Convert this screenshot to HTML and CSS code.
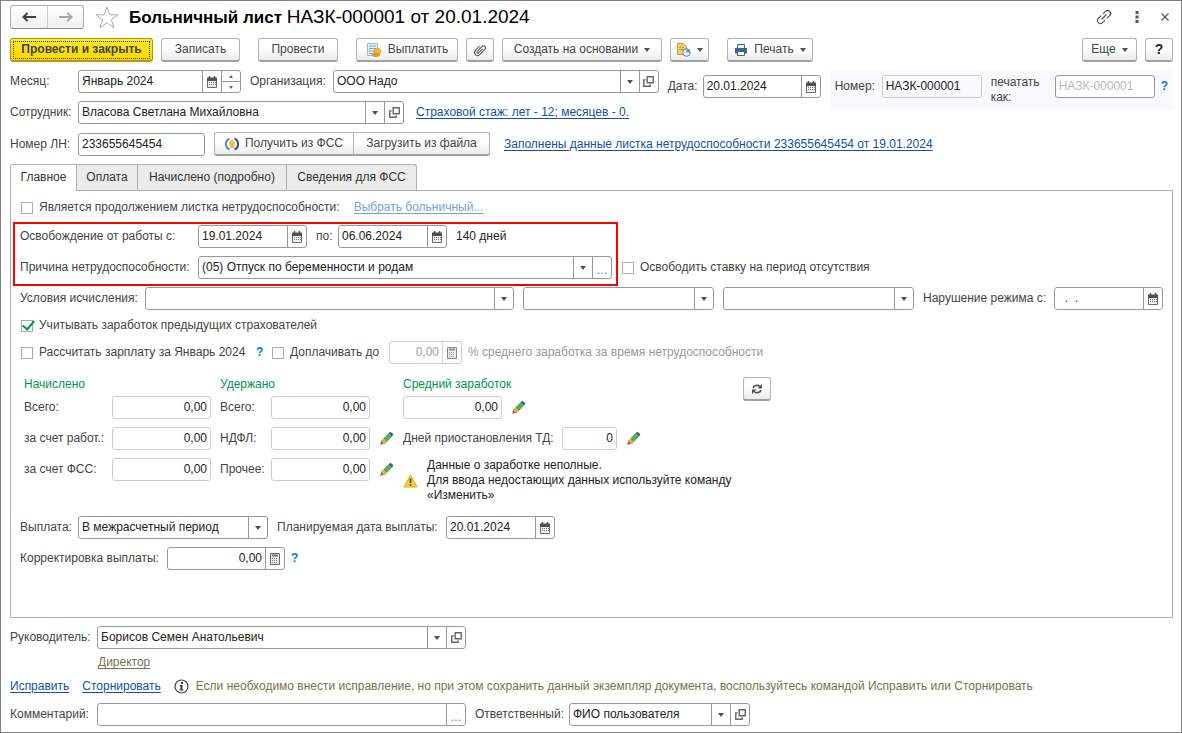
FILE: index.html
```html
<!DOCTYPE html>
<html lang="ru">
<head>
<meta charset="utf-8">
<title>Больничный лист НАЗК-000001</title>
<link rel="stylesheet" href="styles.css">
</head>
<body>
<svg class="sprite" aria-hidden="true">
  <symbol id="cal" viewBox="0 0 12 12">
    <path d="M1.500 2.500h9v9h-9z" fill="#f0f0f0" stroke="#6a6a6a"/><path d="M1 1.500h10v3.500H1z" fill="#505050"/><path d="M3.500 0v3M8.500 0v3" stroke="#505050" stroke-width="1.500"/><path d="M3 6.500h7M3 8.500h7" stroke="#777" stroke-dasharray="1 1"/>
  </symbol>
  <symbol id="calc" viewBox="0 0 12 12">
    <path d="M1.500.500h9v11h-9z" fill="#e6e6e6" stroke="#6a6a6a"/><path d="M3 2.500h6" stroke="#777" stroke-width="2"/><path d="M3 5.500h6M3 7.500h6M3 9.500h6" stroke="#888" stroke-dasharray="1 1"/>
  </symbol>
  <symbol id="arrow" viewBox="0 0 6 4"><path d="M0 0h6L3 4z" fill="#505050"/></symbol>
  <symbol id="open" viewBox="0 0 10 10">
    <path d="M3.800.700h5.500v5.500H3.800z" fill="none" stroke="#666" stroke-width="1.300"/><path d="M2.500 3.500H.700v5.800h5.800V7.500" fill="none" stroke="#666" stroke-width="1.300"/>
  </symbol>
  <symbol id="pencil" viewBox="0 0 14 14">
    <path d="M1 13l1.500-4.500 3 3z" fill="#8a6540"/><path d="M2 9l2-2 3.500 3.500-2.500 2z" fill="#f0a848"/><path d="M4 7l5-5 3.200 3.200-5 5z" fill="#4dae59"/><path d="M9 2l1.500-1.300L13.500 3l-1.400 2.200z" fill="#46576a"/>
  </symbol>
  <symbol id="clip" viewBox="0 0 16 16">
    <g transform="rotate(45 8 8)" fill="none" stroke="#666" stroke-width="1.200"><path d="M5 5.500v6a3 3 0 0 0 6 0V4a2 2 0 0 0-4 0v7a1 1 0 0 0 2 0V5.500"/></g>
  </symbol>
</svg>

<main class="window">
  <header class="title-row">
    <div class="nav">
      <button type="button" aria-label="Назад"><svg width="16" height="10" viewBox="0 0 16 10"><path d="M15 5H3M6.500 1L2.500 5l4 4" fill="none" stroke="#404040" stroke-width="2"/></svg></button>
      <button type="button" aria-label="Вперед"><svg width="16" height="10" viewBox="0 0 16 10"><path d="M1 5h12M9.500 1l4 4-4 4" fill="none" stroke="#a8a8a8" stroke-width="2"/></svg></button>
    </div>
    <button type="button" class="plain" aria-label="В избранное"><svg width="24" height="23" viewBox="0 0 24 23"><path d="M12 1l2.800 7.800H23l-6.600 4.900 2.600 8L12 16.900 5 21.700l2.600-8L1 8.800h8.200z" fill="none" stroke="#a5adb5"/></svg></button>
    <h1>Больничный лист <span>НАЗК-000001 от 20.01.2024</span></h1>
    <div class="window-tools">
      <button type="button" class="plain" aria-label="Ссылка"><svg width="18" height="18" viewBox="0 0 18 18"><g transform="rotate(-45 9 9)" fill="none" stroke="#555" stroke-width="1.200"><path d="M8 6H4a3 3 0 0 0 0 6h3.500M10 12h4a3 3 0 0 0 0-6h-3.500M5.500 9h7"/></g></svg></button>
      <button type="button" class="plain" aria-label="Меню"><svg width="4" height="12" viewBox="0 0 4 12"><path d="M.500 0h3v3h-3zM.500 4.500h3v3h-3zM.500 9h3v3h-3z" fill="#555"/></svg></button>
      <button type="button" class="plain" aria-label="Закрыть"><svg width="8" height="8" viewBox="0 0 8 8"><path d="M.500.500l7 7M7.500.500l-7 7" stroke="#555" stroke-width="1.200"/></svg></button>
    </div>
  </header>

  <div class="toolbar">
    <button type="button" class="btn primary">Провести и закрыть</button>
    <button type="button" class="btn w79">Записать</button>
    <button type="button" class="btn w80 apart">Провести</button>
    <button type="button" class="btn w102 apart"><svg width="16" height="16" viewBox="0 0 16 16"><path d="M1.500 1.500h10v12h-10z" fill="#e9f2f8" stroke="#9db6c8"/><path d="M3 4h7M3 6.500h7M3 9h6M3 11.500h4" stroke="#7fa9c9"/><ellipse cx="10" cy="12.500" rx="4" ry="2.500" fill="#dd9a22"/><ellipse cx="11.500" cy="9" rx="3.500" ry="2.500" fill="#f3bd3b" stroke="#c88a20" stroke-width=".6"/></svg>Выплатить</button>
    <button type="button" class="btn w28" aria-label="Файлы"><svg width="16" height="16"><use href="#clip"/></svg></button>
    <button type="button" class="btn w160">Создать на основании<svg width="6" height="4"><use href="#arrow"/></svg></button>
    <button type="button" class="btn w39" aria-label="Отчеты"><svg width="15" height="15" viewBox="0 0 15 15"><path d="M1.500 1.500h6l3 3v8h-9z" fill="#f3cf68" stroke="#c99b34"/><path d="M3 5h5M3 7.500h5" stroke="#c99b34"/><circle cx="10.500" cy="10.500" r="3.800" fill="#e9f1fa" stroke="#5f7fa8"/><path d="M10.500 10.500V7a3.500 3.500 0 0 1 3.500 3.500z" fill="#5f8cc4"/></svg><svg width="6" height="4"><use href="#arrow"/></svg></button>
    <button type="button" class="btn w86 apart"><svg width="14" height="14" viewBox="0 0 14 14"><path d="M3.500 1.500h7v4h-7z" fill="#fff" stroke="#3d6589"/><path d="M1 5h12v5.500H1z" fill="#3d6589"/><path d="M3.500 8.500h7v4h-7z" fill="#fff" stroke="#3d6589"/></svg>Печать<svg width="6" height="4"><use href="#arrow"/></svg></button>
    <button type="button" class="btn w55 right">Еще<svg width="6" height="4"><use href="#arrow"/></svg></button>
    <button type="button" class="btn w28"><b>?</b></button>
  </div>

  <section class="head">
    <div class="head-left">
      <div class="row">
        <label class="cap main-cap" for="month">Месяц:</label>
        <span class="field w163"><input id="month" value="Январь 2024"><button type="button" aria-label="Календарь"><svg width="12" height="12"><use href="#cal"/></svg></button><span class="spin"><button type="button" aria-label="Больше"><svg width="4" height="3" viewBox="0 0 4 3"><path d="M0 3h4L2 0z" fill="#666"/></svg></button><button type="button" aria-label="Меньше"><svg width="4" height="3" viewBox="0 0 4 3"><path d="M0 0h4L2 3z" fill="#666"/></svg></button></span></span>
        <label class="cap w83 after" for="org">Организация:</label>
        <span class="field grow"><span class="pick"><select id="org"><option>ООО Надо</option></select><svg width="6" height="4"><use href="#arrow"/></svg></span><button type="button" aria-label="Открыть организацию"><svg width="11" height="11"><use href="#open"/></svg></button></span>
      </div>
      <div class="row">
        <label class="cap main-cap" for="emp">Сотрудник:</label>
        <span class="field w326"><span class="pick"><select id="emp"><option>Власова Светлана Михайловна</option></select><svg width="6" height="4"><use href="#arrow"/></svg></span><button type="button" aria-label="Открыть сотрудника"><svg width="11" height="11"><use href="#open"/></svg></button></span>
        <a class="link-gap" href="#">Страховой стаж: лет - 12; месяцев - 0.</a>
      </div>
    </div>
    <div class="date-block">
      <label class="cap w35" for="date">Дата:</label>
      <span class="field w118"><input id="date" value="20.01.2024"><button type="button" aria-label="Календарь"><svg width="12" height="12"><use href="#cal"/></svg></button></span>
    </div>
    <div class="number-block">
      <label class="cap w47" for="num">Номер:</label>
      <span class="field soft w100"><input id="num" value="НАЗК-000001" readonly></span>
      <label class="print-cap" for="numprint">печатать как:</label>
      <span class="field w100"><input id="numprint" placeholder="НАЗК-000001"></span>
      <a class="help" href="#">?</a>
    </div>
  </section>

  <div class="row sheet-row">
    <label class="cap main-cap" for="ln">Номер ЛН:</label>
    <span class="field w127"><input id="ln" value="233655645454"></span>
    <span class="group after"><button type="button" class="btn w140"><svg width="14" height="14" viewBox="0 0 14 14"><path d="M4.500 1.500a6 6 0 0 0 0 11" fill="none" stroke="#5590cf" stroke-width="2.200"/><path d="M9.500 1.500a6 6 0 0 1 0 11" fill="none" stroke="#355988" stroke-width="2.200"/><path d="M7 2l3 4-1 5H5L4 6z" fill="#f4bd3d"/></svg>Получить из ФСС</button><button type="button" class="btn w137">Загрузить из файла</button></span>
    <a class="after-wide" href="#">Заполнены данные листка нетрудоспособности 233655645454 от 19.01.2024</a>
  </div>

  <nav class="tabs" role="tablist">
    <button type="button" role="tab" class="tab w67 active" aria-selected="true">Главное</button>
    <button type="button" role="tab" class="tab w62">Оплата</button>
    <button type="button" role="tab" class="tab w150">Начислено (подробно)</button>
    <button type="button" role="tab" class="tab w131">Сведения для ФСС</button>
  </nav>

  <section class="pane">
    <div class="row first-row">
      <label class="check"><input type="checkbox">Является продолжением листка нетрудоспособности:</label>
      <a class="after-wide faded" href="#">Выбрать больничный...</a>
    </div>
    <div class="leave">
      <div class="marked">
        <div class="row">
          <label class="cap w178" for="from">Освобождение от работы с:</label>
          <span class="field w109"><input id="from" value="19.01.2024"><button type="button" aria-label="Календарь"><svg width="12" height="12"><use href="#cal"/></svg></button></span>
          <label class="cap after w22" for="to">по:</label>
          <span class="field w109"><input id="to" value="06.06.2024"><button type="button" aria-label="Календарь"><svg width="12" height="12"><use href="#cal"/></svg></button></span>
          <span class="after dark">140 дней</span>
        </div>
        <div class="row">
          <label class="cap w178" for="reason">Причина нетрудоспособности:</label>
          <span class="field grow"><span class="pick"><select id="reason"><option>(05) Отпуск по беременности и родам</option></select><svg width="6" height="4"><use href="#arrow"/></svg></span><button type="button" class="dots">...</button></span>
        </div>
      </div>
      <label class="check"><input type="checkbox">Освободить ставку на период отсутствия</label>
    </div>
    <div class="row">
      <label class="cap w125" for="t1">Условия исчисления:</label>
      <span class="field grow"><span class="pick"><select id="t1"></select><svg width="6" height="4"><use href="#arrow"/></svg></span></span>
      <span class="field w191 after"><span class="pick"><select aria-label="Условие 2"></select><svg width="6" height="4"><use href="#arrow"/></svg></span></span>
      <span class="field w191 after"><span class="pick"><select aria-label="Условие 3"></select><svg width="6" height="4"><use href="#arrow"/></svg></span></span>
      <label class="cap after w131" for="viol">Нарушение режима с:</label>
      <span class="field w109"><input id="viol" value="  .  ."><button type="button" aria-label="Календарь"><svg width="12" height="12"><use href="#cal"/></svg></button></span>
    </div>
    <div class="row">
      <label class="check"><input type="checkbox" checked>Учитывать заработок предыдущих страхователей</label>
    </div>
    <div class="row">
      <label class="check w230"><input type="checkbox">Рассчитать зарплату за Январь 2024</label>
      <a class="help w15" href="#">?</a>
      <label class="check w118"><input type="checkbox">Доплачивать до</label>
      <span class="field soft w73"><input class="num pale" aria-label="Процент" value="0,00" disabled><button type="button" class="pale" aria-label="Калькулятор" disabled><svg width="12" height="12"><use href="#calc"/></svg></button></span>
      <span class="percent">% среднего заработка за время нетрудоспособности</span>
    </div>

    <div class="totals">
      <div class="total-col accrued">
        <h2>Начислено</h2>
        <div class="row"><label class="cap w88" for="a1">Всего:</label><span class="field soft w99"><input id="a1" class="num" value="0,00" readonly></span></div>
        <div class="row"><label class="cap w88" for="a2">за счет работ.:</label><span class="field soft w99"><input id="a2" class="num" value="0,00" readonly></span></div>
        <div class="row"><label class="cap w88" for="a3">за счет ФСС:</label><span class="field soft w99"><input id="a3" class="num" value="0,00" readonly></span></div>
      </div>
      <div class="total-col held">
        <h2>Удержано</h2>
        <div class="row"><label class="cap w51" for="h1">Всего:</label><span class="field soft w99"><input id="h1" class="num" value="0,00" readonly></span></div>
        <div class="row"><label class="cap w51" for="h2">НДФЛ:</label><span class="field soft w99"><input id="h2" class="num" value="0,00" readonly></span><button type="button" class="plain after" aria-label="Изменить НДФЛ"><svg width="15" height="15"><use href="#pencil"/></svg></button></div>
        <div class="row"><label class="cap w51" for="h3">Прочее:</label><span class="field soft w99"><input id="h3" class="num" value="0,00" readonly></span><button type="button" class="plain after" aria-label="Изменить прочее"><svg width="15" height="15"><use href="#pencil"/></svg></button></div>
      </div>
      <div class="total-col average">
        <h2>Средний заработок</h2>
        <div class="row"><span class="field soft w99"><input class="num" aria-label="Средний заработок" value="0,00" readonly></span><button type="button" class="plain after" aria-label="Изменить средний заработок"><svg width="15" height="15"><use href="#pencil"/></svg></button></div>
        <div class="row"><label class="cap w159" for="td">Дней приостановления ТД:</label><span class="field soft w55"><input id="td" class="num" value="0" readonly></span><button type="button" class="plain after" aria-label="Изменить дни"><svg width="15" height="15"><use href="#pencil"/></svg></button></div>
        <div class="warning"><svg width="15" height="14" viewBox="0 0 15 14"><path d="M7.500 1L14 13H1z" fill="#f6d32b" stroke="#d2ad1c" stroke-linejoin="round"/><path d="M7.500 4.500v4.500M7.500 10.300v1.500" stroke="#4a4220" stroke-width="1.700"/></svg><p>Данные о заработке неполные.<br>Для ввода недостающих данных используйте команду<br>«Изменить»</p></div>
      </div>
      <button type="button" class="btn w28" aria-label="Обновить"><svg width="12" height="12" viewBox="0 0 12 12"><path d="M2 5a4 3 0 0 1 7-1.500M10 7a4 3 0 0 1-7 1.500" fill="none" stroke="#505050" stroke-width="1.600"/><path d="M11 1v4.500H6.500zM1 11V6.500h4.500z" fill="#505050"/></svg></button>
    </div>

    <div class="row">
      <label class="cap w58" for="pay">Выплата:</label>
      <span class="field w190"><span class="pick"><select id="pay"><option>В межрасчетный период</option></select><svg width="6" height="4"><use href="#arrow"/></svg></span></span>
      <label class="cap after w169" for="paydate">Планируемая дата выплаты:</label>
      <span class="field w109"><input id="paydate" value="20.01.2024"><button type="button" aria-label="Календарь"><svg width="12" height="12"><use href="#cal"/></svg></button></span>
    </div>
    <div class="row">
      <label class="cap w147" for="corr">Корректировка выплаты:</label>
      <span class="field w118"><input id="corr" class="num" value="0,00"><button type="button" aria-label="Калькулятор"><svg width="12" height="12"><use href="#calc"/></svg></button></span>
      <a class="help" href="#">?</a>
    </div>
  </section>

  <footer class="foot">
    <div class="row">
      <label class="cap foot-cap" for="boss">Руководитель:</label>
      <span class="field w369"><span class="pick"><select id="boss"><option>Борисов Семен Анатольевич</option></select><svg width="6" height="4"><use href="#arrow"/></svg></span><button type="button" aria-label="Открыть руководителя"><svg width="11" height="11"><use href="#open"/></svg></button></span>
    </div>
    <div class="row post"><a class="olive" href="#">Директор</a></div>
    <div class="row fix">
      <a href="#">Исправить</a>
      <a href="#">Сторнировать</a>
      <svg width="15" height="15" viewBox="0 0 15 15"><circle cx="7.500" cy="7.500" r="6.500" fill="#fff" stroke="#444" stroke-width="1.200"/><path d="M7 3h2v2H7zM6 6h2.500v4.500h1v1H5.500v-1h1V7H6z" fill="#333"/></svg>
      <span class="olive">Если необходимо внести исправление, но при этом сохранить данный экземпляр документа, воспользуйтесь командой Исправить или Сторнировать</span>
    </div>
    <div class="row">
      <label class="cap foot-cap" for="comment">Комментарий:</label>
      <span class="field w369"><input id="comment"><button type="button" class="dots">...</button></span>
      <label class="cap after w94" for="resp">Ответственный:</label>
      <span class="field w181"><span class="pick"><select id="resp"><option>ФИО пользователя</option></select><svg width="6" height="4"><use href="#arrow"/></svg></span><button type="button" aria-label="Открыть ответственного"><svg width="11" height="11"><use href="#open"/></svg></button></span>
    </div>
  </footer>
</main>
</body>
</html>
```
FILE: styles.css
```css
* { box-sizing: border-box; }
body {
  margin: 0;
  background: #fff;
  color: #444;
  font: 12px/15px "Liberation Sans", Arial, sans-serif;
}
button, input, select { font: inherit; color: inherit; margin: 0; }
svg { display: block; flex: none; }
a { color: #1450a8; text-underline-offset: 2px; white-space: nowrap; }
p { margin: 0; }
.sprite { position: absolute; width: 0; height: 0; }

.window {
  display: flex;
  flex-direction: column;
  min-height: 100vh;
  padding: 3px 8px 6px 9px;
  border: 1px solid #808080;
}
.row { display: flex; align-items: center; }
.grow { flex: 1; min-width: 0; }
.after { margin-left: 9px; }
.link-gap { margin-left: 12px; }
.after-wide { margin-left: 14px; }
.cap { flex: none; white-space: nowrap; }
.dark { color: #222; }

/* title */
.title-row { display: flex; align-items: center; height: 26px; }
.nav { display: flex; height: 24px; border: 1px solid #b0b0b0; border-bottom-color: #8c8c8c; border-radius: 3px; background: linear-gradient(#fff, #f0f0f0); }
.nav button { display: flex; align-items: center; justify-content: center; width: 36px; padding: 0; border: 0; background: none; }
.nav button + button { border-left: 1px solid #ccc; }
.plain { display: flex; padding: 0; border: 0; background: none; }
.title-row > .plain { margin-left: 11px; }
h1 { flex: 1; margin: 0 0 0 10px; color: #000; font-size: 17px; line-height: 22px; font-weight: 700; }
h1 span { font-size: 19px; font-weight: 400; }
.window-tools { display: flex; align-items: center; gap: 22px; padding-right: 4px; }

/* buttons */
.toolbar { display: flex; gap: 8px; margin-top: 8px; }
.btn {
  display: flex;
  align-items: center;
  justify-content: center;
  gap: 6px;
  flex: none;
  height: 24px;
  padding: 0;
  border: 1px solid #b2b2b2;
  border-bottom: 2px solid #a0a0a0;
  border-radius: 3px;
  background: linear-gradient(#fff 40%, #ececec);
  white-space: nowrap;
}
.btn b { color: #222; font-size: 14px; }
.primary { width: 143px; border-color: #b39b00; background: linear-gradient(#ffe92e, #f7d600); font-weight: 700; outline: 1px dotted #333; outline-offset: -4px; }
.apart { margin-left: 10px; }
.right { margin-left: auto; }
.group { display: flex; }
.group .btn:first-child { border-radius: 3px 0 0 3px; }
.group .btn:last-child { margin-left: -1px; border-radius: 0 3px 3px 0; }

/* fields */
.field { display: flex; flex: none; height: 23px; border: 1px solid #999; border-radius: 3px; background: #fff; overflow: hidden; color: #222; }
.field.grow { flex: 1; }
.field.soft { border-color: #ccc; }
.number-block .soft { background: none; }
.field input { flex: 1; min-width: 0; width: 0; padding: 0 3px; border: 0; outline: 0; background: none; }
.field input::placeholder { color: #b8b8b8; opacity: 1; }
.field .num { text-align: right; }
.field > button { display: flex; flex: none; align-items: center; justify-content: center; width: 19px; padding: 0; border: 0; border-left: 1px solid #999; background: none; }
.field > .dots { align-items: flex-end; color: #777; }
.pick { position: relative; display: flex; flex: 1; min-width: 0; }
.pick select { flex: 1; min-width: 0; padding: 0 20px 0 3px; border: 0; appearance: none; background: linear-gradient(#999, #999) right 18px top / 1px 100% no-repeat; }
.pick svg { position: absolute; right: 6px; top: 9px; pointer-events: none; }
.spin { display: flex; flex-direction: column; width: 19px; border-left: 1px solid #999; }
.spin button { display: flex; flex: 1; align-items: center; justify-content: center; padding: 0; border: 0; background: none; }
.spin button + button { border-top: 1px solid #999; }
.field .pale { color: #888; border-color: #ccc; opacity: .8; }
.help { flex: none; margin-left: 6px; color: #0a7ac0; font-weight: 700; text-decoration: none; }
.check { display: flex; align-items: center; gap: 6px; flex: none; white-space: nowrap; }
.check input { position: relative; appearance: none; flex: none; width: 12px; height: 12px; margin-left: 1px; border: 1px solid #aaa; background: #fff; }
.check input:checked::after { content: ""; position: absolute; left: 3px; top: -3px; width: 5px; height: 10px; border: solid #009646; border-width: 0 2px 2px 0; transform: rotate(40deg); }

/* document header */
.head { display: flex; align-items: flex-start; margin-top: 8px; }
.head-left { flex: 1; min-width: 0; display: grid; gap: 8px; }
.main-cap { width: 68px; }
.date-block { display: flex; align-items: center; margin: 5px 9px 0; }
.number-block { display: flex; align-items: flex-start; height: 40px; padding: 5px; background: #f7f9ff; }
.number-block .cap, .number-block .help { line-height: 23px; }
.print-cap { width: 64px; margin-left: 9px; padding-right: 10px; }
.sheet-row { margin-top: 8px; }

/* tabs */
.tabs { display: flex; margin-top: 8px; }
.tab { height: 26px; margin-right: -1px; padding: 0; border: 1px solid #b0b0b0; border-bottom: 0; background: #ebebeb; color: #333; white-space: nowrap; }
.tab:first-child { border-radius: 3px 0 0 0; }
.tab:last-child { border-radius: 0 3px 0 0; }
.tab.active { position: relative; height: 27px; margin-bottom: -1px; padding-bottom: 1px; background: #fff; }
.pane { flex: 1; display: flex; flex-direction: column; gap: 8px; padding: 9px 9px 8px; border: 1px solid #b0b0b0; }
.first-row { margin-bottom: 2px; }

.faded { color: #7da0d8; }
.leave { display: flex; align-items: flex-end; gap: 9px; }
.leave > .check { height: 23px; }
.marked { position: relative; flex: 0 1 592px; display: grid; gap: 8px; }
.marked::after { content: ""; position: absolute; inset: -3px -6px -7px -7px; border: 2px solid #f00; pointer-events: none; }
.percent { margin-left: 6px; color: #999; white-space: nowrap; }

.totals { display: flex; align-items: flex-start; margin-top: 5px; padding-left: 4px; }
.total-col { display: grid; grid-auto-rows: min-content; gap: 8px; }
h2 { margin: 0 0 -4px; color: #009646; font-size: 12px; line-height: 15px; font-weight: 400; }
.accrued { width: 196px; }
.held { width: 183px; }
.average { width: 340px; }
.warning { display: flex; align-items: center; gap: 9px; }
.warning p { color: #222; }
.totals + .row { margin-top: 5px; }

/* footer */
.foot { margin-top: 8px; }
.foot-cap { width: 87px; }
.post { height: 27px; padding-left: 88px; }
.olive { color: #78734b; white-space: nowrap; }
.fix { gap: 13px; height: 20px; margin-bottom: 7px; }
.fix svg { margin-right: -6px; }

/* shared widths */
.w15 { width: 15px; } .w22 { width: 22px; } .w28 { width: 28px; } .w35 { width: 35px; }
.w39 { width: 39px; } .w47 { width: 47px; } .w51 { width: 51px; } .w55 { width: 55px; }
.w58 { width: 58px; } .w62 { width: 62px; } .w67 { width: 67px; } .w73 { width: 73px; }
.w79 { width: 79px; } .w80 { width: 80px; } .w83 { width: 83px; } .w86 { width: 86px; }
.w88 { width: 88px; } .w94 { width: 94px; } .w99 { width: 99px; } .w100 { width: 100px; }
.w102 { width: 102px; } .w109 { width: 109px; } .w118 { width: 118px; } .w125 { width: 125px; }
.w127 { width: 127px; } .w131 { width: 131px; } .w137 { width: 137px; } .w140 { width: 140px; }
.w147 { width: 147px; } .w150 { width: 150px; } .w159 { width: 159px; } .w160 { width: 160px; }
.w163 { width: 163px; } .w169 { width: 169px; } .w178 { width: 178px; } .w181 { width: 181px; }
.w190 { width: 190px; } .w191 { width: 191px; } .w230 { width: 230px; } .w326 { width: 326px; }
.w369 { width: 369px; }
```
